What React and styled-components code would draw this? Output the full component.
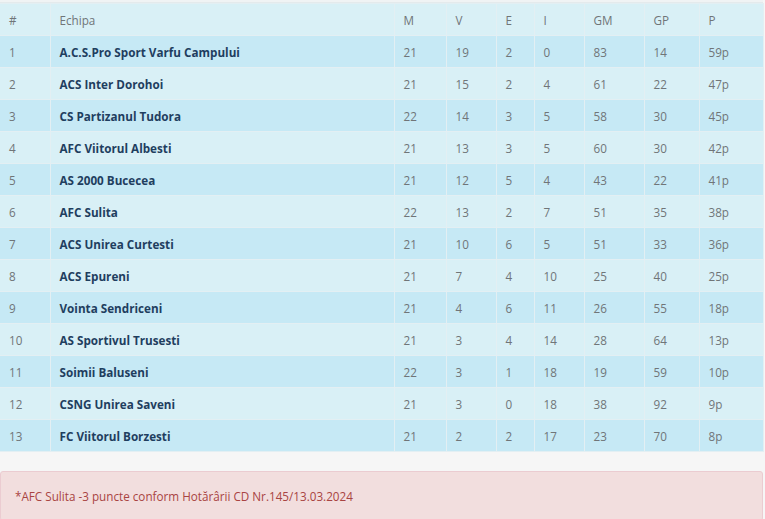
import React from 'react';
import styled, { createGlobalStyle } from 'styled-components';

const GlobalStyle = createGlobalStyle`
  body {
    margin: 0;
    background: #ffffff;
    font-family: "Open Sans", "Liberation Sans", sans-serif;
  }
`;

const Page = styled.div`
  width: 765px;
  height: 519px;
  overflow: hidden;
  background: #f6f6f6;
`;

const TopStrip = styled.div`
  height: 3px;
  width: 763px;
  background: #f0f3f4;
  border-bottom: 1px solid #e4eaec;
  box-sizing: border-box;
`;

const Table = styled.table`
  width: 763px;
  border-collapse: collapse;
  table-layout: fixed;
  font-size: 11.7px;
`;

const Row = styled.tr`
  height: 32px;
  background: ${p => (p.$dark ? '#c6e9f5' : '#d9f0f6')};
`;

const Cell = styled.td`
  padding: 0 0 0 9px;
  border: 1px solid #e3eff3;
  color: ${p => (p.$team ? '#1f3e5f' : '#707578')};
  font-weight: ${p => (p.$team ? 700 : 400)};
  white-space: nowrap;
  border-left: ${p => (p.$first ? 'none' : '1px solid #e3eff3')};
`;

const HeadCell = styled.th`
  padding: 0 0 0 9px;
  border: 1px solid #e3eff3;
  border-left: ${p => (p.$first ? 'none' : '1px solid #e3eff3')};
  text-align: left;
  font-weight: 400;
  color: #707578;
`;

const Alert = styled.div`
  margin-top: 19px;
  width: 763px;
  box-sizing: border-box;
  background: #f2dede;
  border: 1px solid #ebccd1;
  border-radius: 3px;
  padding: 15px 14px;
  color: #a94442;
  font-size: 11.7px;
  line-height: 18px;
`;

const widths = [50, 344, 52, 50, 38, 50, 60, 55, 64];
const headers = ['#', 'Echipa', 'M', 'V', 'E', 'I', 'GM', 'GP', 'P'];

const rows = [
  ['A.C.S.Pro Sport Varfu Campului', 21, 19, 2, 0, 83, 14, '59p'],
  ['ACS Inter Dorohoi', 21, 15, 2, 4, 61, 22, '47p'],
  ['CS Partizanul Tudora', 22, 14, 3, 5, 58, 30, '45p'],
  ['AFC Viitorul Albesti', 21, 13, 3, 5, 60, 30, '42p'],
  ['AS 2000 Bucecea', 21, 12, 5, 4, 43, 22, '41p'],
  ['AFC Sulita', 22, 13, 2, 7, 51, 35, '38p'],
  ['ACS Unirea Curtesti', 21, 10, 6, 5, 51, 33, '36p'],
  ['ACS Epureni', 21, 7, 4, 10, 25, 40, '25p'],
  ['Vointa Sendriceni', 21, 4, 6, 11, 26, 55, '18p'],
  ['AS Sportivul Trusesti', 21, 3, 4, 14, 28, 64, '13p'],
  ['Soimii Baluseni', 22, 3, 1, 18, 19, 59, '10p'],
  ['CSNG Unirea Saveni', 21, 3, 0, 18, 38, 92, '9p'],
  ['FC Viitorul Borzesti', 21, 2, 2, 17, 23, 70, '8p'],
];

export default function App() {
  return (
    <Page>
      <GlobalStyle />
      <TopStrip />
      <Table>
        <colgroup>
          {widths.map((w, i) => (
            <col key={i} style={{ width: w }} />
          ))}
        </colgroup>
        <thead>
          <Row>
            {headers.map((h, i) => (
              <HeadCell key={h} $first={i === 0}>{h}</HeadCell>
            ))}
          </Row>
        </thead>
        <tbody>
          {rows.map((r, i) => (
            <Row key={r[0]} $dark={i % 2 === 0}>
              <Cell $first>{i + 1}</Cell>
              <Cell $team>{r[0]}</Cell>
              {r.slice(1).map((v, j) => (
                <Cell key={j}>{v}</Cell>
              ))}
            </Row>
          ))}
        </tbody>
      </Table>
      <Alert>*AFC Sulita -3 puncte conform Hotărârii CD Nr.145/13.03.2024</Alert>
    </Page>
  );
}
